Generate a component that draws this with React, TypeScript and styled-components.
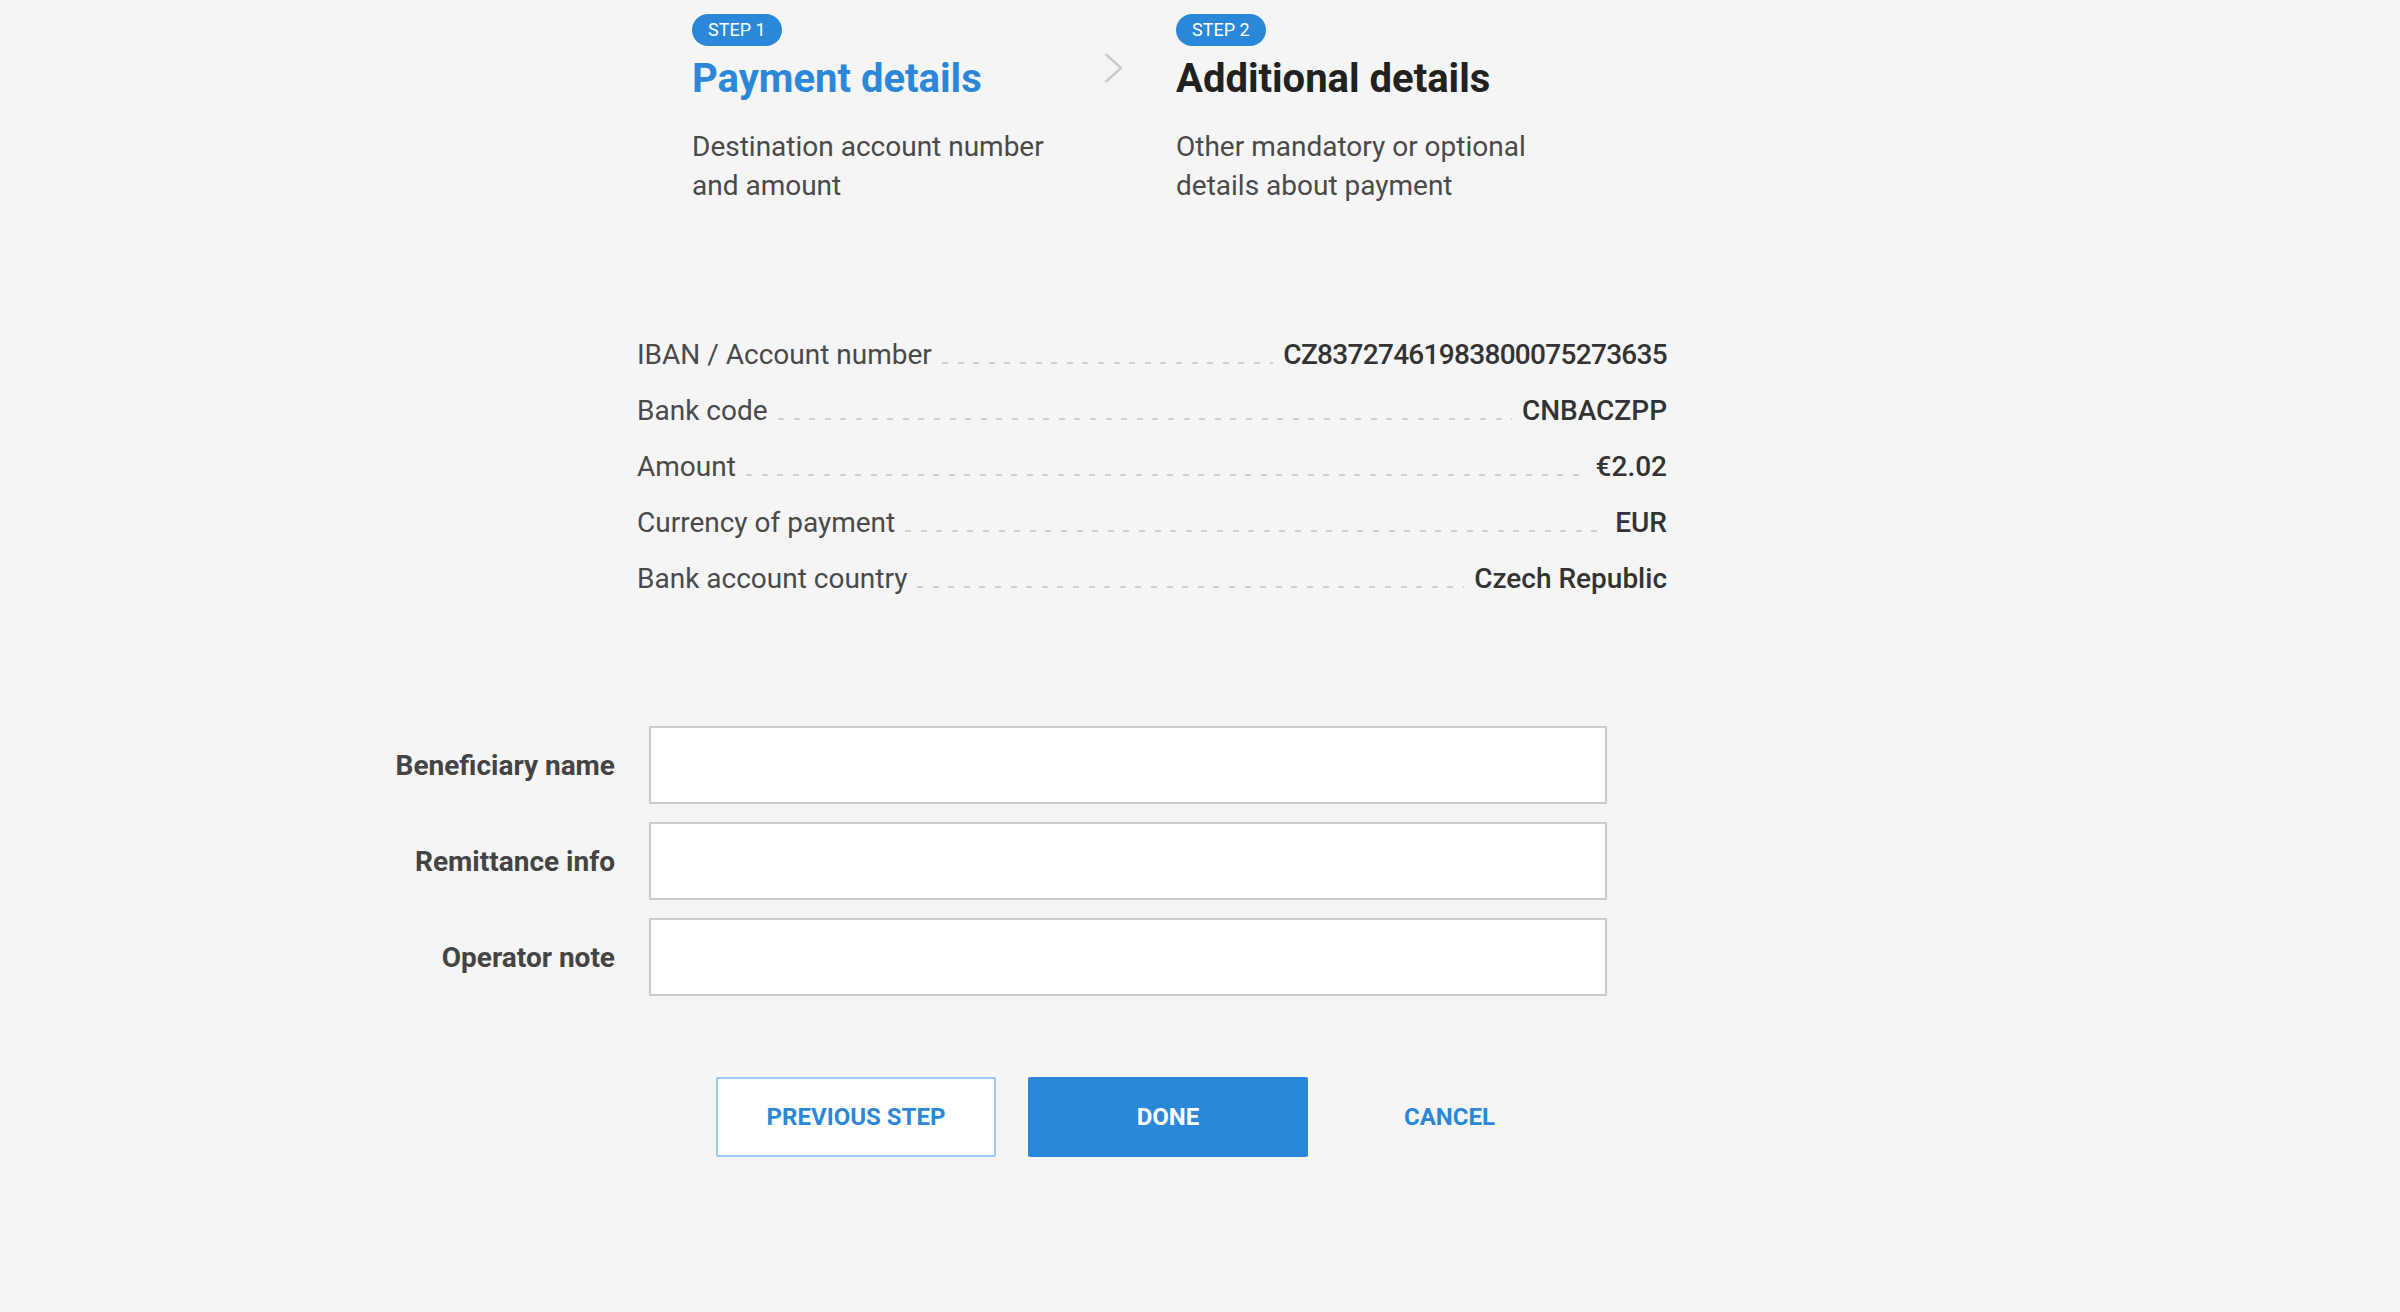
import React from "react";
import styled, { createGlobalStyle } from "styled-components";

const GlobalStyle = createGlobalStyle`
  html, body {
    margin: 0;
    padding: 0;
    background: #f5f5f5;
    font-family: Roboto, "Noto Sans", "Liberation Sans", sans-serif;
  }
  * { box-sizing: border-box; }
`;

const BLUE = "#2b88d9";

const Page = styled.div`
  min-height: 100vh;
  padding: 14px 0 0 365px;
  display: flex;
  flex-direction: column;
  align-items: flex-start;
`;

const StepsRow = styled.div`
  display: flex;
  margin-left: 327px;
`;

const Step = styled.div`
  width: 412px;
  display: flex;
  flex-direction: column;
  align-items: flex-start;
`;

const Badge = styled.span`
  height: 32px;
  line-height: 32px;
  padding: 0 16px;
  border-radius: 16px;
  background: ${BLUE};
  color: #fff;
  font-size: 18px;
`;

const StepTitle = styled.h2<{ $active?: boolean }>`
  margin: 9px 0 0;
  font-size: 40px;
  line-height: 48px;
  font-weight: 700;
  color: ${(p) => (p.$active ? BLUE : "#212121")};
`;

const StepDesc = styled.p`
  margin: 24px 0 0;
  max-width: 380px;
  font-size: 28px;
  line-height: 39px;
  color: #4a4a4a;
`;

const ChevronBox = styled.div`
  width: 72px;
  padding-top: 39px;
`;

const DetailsList = styled.div`
  margin: 122px 0 0 272px;
  width: 1030px;
  display: flex;
  flex-direction: column;
`;

const DetailRow = styled.div`
  display: flex;
  height: 56px;
  line-height: 56px;
  font-size: 28px;
  white-space: nowrap;
`;

const DetailLabel = styled.span`
  color: #4a4a4a;
`;

const Leader = styled.span`
  flex: 1;
  height: 2px;
  margin: 35px 10px 0;
  background-image: repeating-linear-gradient(
    to right,
    #d0d0d0 0,
    #d0d0d0 6px,
    transparent 6px,
    transparent 15.6px
  );
`;

const DetailValue = styled.span<{ $compact?: boolean }>`
  font-weight: 500;
  color: #333;
  letter-spacing: ${(p) => (p.$compact ? "-0.7px" : "normal")};
`;

const Form = styled.div`
  margin-top: 119px;
  display: grid;
  grid-template-columns: 250px 958px;
  column-gap: 34px;
  row-gap: 18px;
  align-items: center;
`;

const FieldLabel = styled.label`
  text-align: right;
  font-size: 28px;
  font-weight: 700;
  color: #444;
`;

const TextInput = styled.input`
  height: 78px;
  width: 100%;
  border: 2px solid #cccccc;
  background: #fff;
  padding: 0 20px;
  font-size: 27px;
  font-family: inherit;
  outline: none;
`;

const Buttons = styled.div`
  margin: 81px 0 0 351px;
  display: flex;
  gap: 32px;
`;

const Button = styled.button<{ $variant: "outline" | "primary" | "text" }>`
  height: 80px;
  min-width: ${(p) => (p.$variant === "text" ? "auto" : "280px")};
  padding: 0 ${(p) => (p.$variant === "text" ? "64px" : "24px")};
  font-family: inherit;
  font-size: 24px;
  font-weight: 700;
  cursor: pointer;
  border-radius: 2px;
  border: ${(p) => (p.$variant === "outline" ? "2px solid #9dcbf3" : "none")};
  background: ${(p) =>
    p.$variant === "primary" ? BLUE : p.$variant === "outline" ? "#fff" : "transparent"};
  color: ${(p) => (p.$variant === "primary" ? "#fff" : BLUE)};
`;

const details: [string, string, boolean?][] = [
  ["IBAN / Account number", "CZ83727461983800075273635", true],
  ["Bank code", "CNBACZPP"],
  ["Amount", "€2.02"],
  ["Currency of payment", "EUR"],
  ["Bank account country", "Czech Republic"],
];

const fields = ["Beneficiary name", "Remittance info", "Operator note"];

export default function App() {
  return (
    <>
      <GlobalStyle />
      <Page>
        <StepsRow>
          <Step>
            <Badge>STEP 1</Badge>
            <StepTitle $active>Payment details</StepTitle>
            <StepDesc>Destination account number and amount</StepDesc>
          </Step>
          <ChevronBox>
            <svg width="20" height="30" viewBox="0 0 20 30" fill="none">
              <polyline
                points="2,1.5 17,15 2,28.5"
                stroke="#cbcbcb"
                strokeWidth="2.5"
                strokeLinecap="round"
                strokeLinejoin="round"
              />
            </svg>
          </ChevronBox>
          <Step>
            <Badge>STEP 2</Badge>
            <StepTitle>Additional details</StepTitle>
            <StepDesc>Other mandatory or optional details about payment</StepDesc>
          </Step>
        </StepsRow>

        <DetailsList>
          {details.map(([label, value, compact]) => (
            <DetailRow key={label}>
              <DetailLabel>{label}</DetailLabel>
              <Leader />
              <DetailValue $compact={compact}>{value}</DetailValue>
            </DetailRow>
          ))}
        </DetailsList>

        <Form>
          {fields.map((f) => (
            <React.Fragment key={f}>
              <FieldLabel>{f}</FieldLabel>
              <TextInput type="text" aria-label={f} />
            </React.Fragment>
          ))}
        </Form>

        <Buttons>
          <Button $variant="outline">PREVIOUS STEP</Button>
          <Button $variant="primary">DONE</Button>
          <Button $variant="text">CANCEL</Button>
        </Buttons>
      </Page>
    </>
  );
}
